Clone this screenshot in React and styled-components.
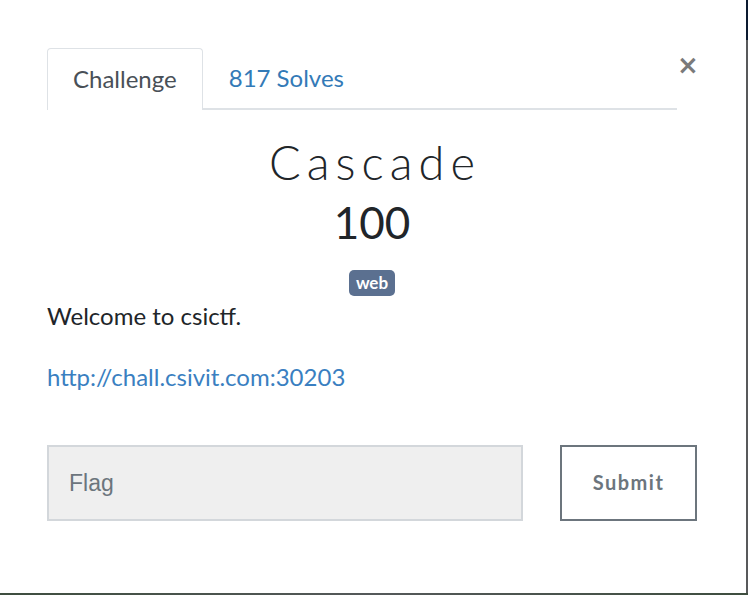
import React from "react";
import styled, { createGlobalStyle } from "styled-components";

const Global = createGlobalStyle`
  html, body {
    margin: 0;
    padding: 0;
  }
  body {
    width: 748px;
    height: 595px;
    overflow: hidden;
    font-family: Lato, "Open Sans", sans-serif;
    background:
      linear-gradient(#0c1a30, #0c1a30) right top / 2px 40px no-repeat,
      linear-gradient(to right, #3e4e3f, #55595a 50%, #3e4e3f) left bottom / 100% 2px no-repeat,
      #58595b;
  }
`;

const Modal = styled.div`
  width: 746px;
  height: 593px;
  box-sizing: border-box;
  background: #fff;
  padding: 48px 49px 0 47px;
  color: #212529;
`;

const Header = styled.div`
  display: flex;
  align-items: flex-start;
`;

const Tabs = styled.div`
  flex: 1;
  display: flex;
  border-bottom: 2px solid #dee2e6;
`;

const Tab = styled.div`
  box-sizing: border-box;
  display: flex;
  align-items: center;
  padding: 0 25px 2px;
  font-size: 24px;
  color: ${(p) => (p.active ? "#495057" : "#337ab7")};
  border: 1px solid ${(p) => (p.active ? "#dee2e6" : "transparent")};
  border-bottom: none;
  border-radius: 4px 4px 0 0;
  background: ${(p) => (p.active ? "#fff" : "transparent")};
  height: ${(p) => (p.active ? "62px" : "60px")};
  margin-bottom: ${(p) => (p.active ? "-2px" : "0")};
`;

const Close = styled.button`
  width: 20px;
  margin-top: 6px;
  padding: 0;
  border: none;
  background: none;
  color: #7a7a7a;
  font-family: "DejaVu Sans", sans-serif;
  font-weight: bold;
  font-size: 26px;
  line-height: 22px;
  text-align: right;
`;

const Center = styled.div`
  display: flex;
  flex-direction: column;
  align-items: center;
`;

const Title = styled.h2`
  margin: 22px 0 0 6px;
  font-weight: 300;
  font-size: 47px;
  line-height: 60px;
  letter-spacing: 6px;
  color: #212529;
`;

const Points = styled.h3`
  margin: 1px 0 0;
  font-weight: 400;
  font-size: 44px;
  line-height: 58px;
  color: #212529;
`;

const Badge = styled.span`
  margin-top: 19px;
  background: #5b7090;
  color: #fff;
  font-weight: bold;
  font-size: 17px;
  line-height: 26px;
  padding: 0 7px;
  border-radius: 5px;
`;

const Text = styled.p`
  margin: ${(p) => p.mt || "0"} 0 0;
  font-size: 24px;
  line-height: 30px;
  color: #212529;
`;

const Link = styled.a`
  color: #3a7fc1;
  text-decoration: none;
`;

const Form = styled.div`
  display: flex;
  align-items: flex-start;
  justify-content: space-between;
  margin-top: 53px;
`;

const Input = styled.input`
  width: 476px;
  height: 76px;
  box-sizing: border-box;
  border: 2px solid #d3d7db;
  background: #efefef;
  padding: 0 20px;
  font-family: "Liberation Sans", Arial, sans-serif;
  font-size: 23px;
  outline: none;
  &::placeholder {
    color: #6c757d;
  }
`;

const Button = styled.button`
  width: 137px;
  height: 76px;
  box-sizing: border-box;
  border: 2px solid #6c757d;
  background: #fff;
  color: #6c757d;
  font-family: Lato, sans-serif;
  font-weight: bold;
  font-size: 20px;
  letter-spacing: 1.5px;
  padding-bottom: 4px;
`;

export default function App() {
  return (
    <>
      <Global />
      <Modal>
        <Header>
          <Tabs>
            <Tab active>Challenge</Tab>
            <Tab>817 Solves</Tab>
          </Tabs>
          <Close>×</Close>
        </Header>
        <Center>
          <Title>Cascade</Title>
          <Points>100</Points>
          <Badge>web</Badge>
        </Center>
        <Text mt="5px">Welcome to csictf.</Text>
        <Text mt="31px">
          <Link href="#">http://chall.csivit.com:30203</Link>
        </Text>
        <Form>
          <Input placeholder="Flag" />
          <Button>Submit</Button>
        </Form>
      </Modal>
    </>
  );
}
